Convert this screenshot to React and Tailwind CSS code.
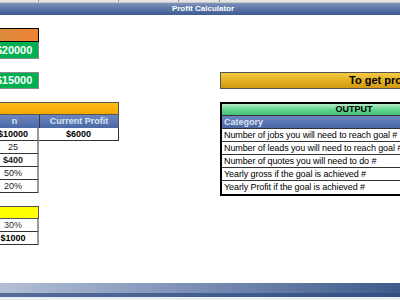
import React from "react";

const rows = [
  "Number of jobs you will need to reach goal #",
  "Number of leads you will need to reach goal #",
  "Number of quotes you will need to do #",
  "Yearly gross if the goal is achieved #",
  "Yearly Profit if the goal is achieved #",
];

const leftRows = [
  { v: "25", bold: false },
  { v: "$400", bold: true },
  { v: "50%", bold: false },
  { v: "20%", bold: false },
];

function ColumnHeads() {
  // spreadsheet column headers, only the bottom edge shows
  return (
    <div className="h-[3px] flex bg-[#e4e4e4] border-b border-[#c8c8c8] shrink-0">
      <div className="w-[39px] border-r border-[#9a9a9a]" />
      <div className="w-[80px] border-r border-[#9a9a9a]" />
      <div className="w-[60px] border-r border-[#9a9a9a]" />
      <div className="w-[41px] border-r border-[#9a9a9a]" />
    </div>
  );
}

export default function App() {
  return (
    <div className="w-[400px] h-[300px] overflow-hidden bg-white flex flex-col font-['Liberation_Sans',Arial,sans-serif]">
      <ColumnHeads />
      <div className="h-[12px] shrink-0 flex items-center justify-center bg-[linear-gradient(to_bottom,#8093bb_0%,#5d76a8_45%,#3f5c92_100%)]">
        <span className="text-[8px] font-bold text-white leading-none pl-[6px]">Profit Calculator</span>
      </div>

      <div className="flex-1 flex">
        {/* left column */}
        <div className="-ml-[11px] w-[130px] shrink-0 flex flex-col text-[9px] leading-none">
          <div className="mt-[13px] w-[50px] h-[14px] border border-black bg-[linear-gradient(to_right,#d38c3e,#ef8234)]" />
          <div className="w-[50px] h-[17px] bg-[#00b050] border border-t-0 border-[#8c8c8c] flex items-center justify-center">
            <span className="text-[11px] font-bold text-white">$20000</span>
          </div>
          <div className="mt-[13px] w-[50px] h-[17px] bg-[#00b050] border border-[#8c8c8c] flex items-center justify-center">
            <span className="text-[11px] font-bold text-white">$15000</span>
          </div>

          <div className="mt-[13px] h-[13px] border border-[#555] bg-[linear-gradient(to_bottom,#ffbc1a,#f6a900)]" />
          <div className="h-[13px] flex bg-[linear-gradient(to_bottom,#6a86c0,#4a68a6)] text-[#dbe3f1] font-bold border-x border-[#555]">
            <div className="w-[50px] border-r border-[#3a3a3a] flex items-center justify-center">n</div>
            <div className="flex-1 flex items-center justify-center">Current Profit</div>
          </div>
          <div className="h-[13px] flex font-bold text-black">
            <div className="w-[50px] border-r-2 border-b border-r-[#9a9a9a] border-b-[#333] flex items-center justify-center">$10000</div>
            <div className="flex-1 border-r border-b border-[#333] flex items-center justify-center">$6000</div>
          </div>
          {leftRows.map((r) => (
            <div
              key={r.v}
              className={`w-[50px] h-[13px] border-r-2 border-b border-r-[#9a9a9a] border-b-[#333] flex items-center justify-center text-[#222] ${r.bold ? "font-bold" : ""}`}
            >
              {r.v}
            </div>
          ))}

          <div className="mt-[13px] w-[50px] h-[13px] bg-[#ffff00] border border-[#555]" />
          <div className="w-[50px] h-[13px] border-r-2 border-b border-r-[#9a9a9a] border-b-[#333] flex items-center justify-center text-[#333]">30%</div>
          <div className="w-[50px] h-[13px] border-r-2 border-b border-r-[#9a9a9a] border-b-[#333] flex items-center justify-center font-bold text-black">$1000</div>
        </div>

        {/* right column */}
        <div className="ml-[101px] w-[268px] shrink-0 flex flex-col text-[9px] leading-none">
          <div className="mt-[57px] h-[17px] border border-[#555] bg-[linear-gradient(to_bottom,#f3ca45,#e2ae1e_55%,#cf9912)] flex items-center pl-[128px]">
            <span className="text-[11px] font-bold text-black whitespace-nowrap">To get profit of $15000</span>
          </div>

          <div className="mt-[13px] border-2 border-black flex flex-col">
            <div className="h-[12px] bg-[linear-gradient(to_bottom,#b8ecc8,#62d58f_50%,#45c277)] border-b border-[#333] flex items-center justify-center font-bold text-black">
              OUTPUT
            </div>
            <div className="h-[13px] bg-[linear-gradient(to_bottom,#6a86c0,#4a68a6)] border-b border-[#333] flex items-center px-[2px] font-bold text-[#dbe3f1]">
              Category
            </div>
            {rows.map((t, i) => (
              <div
                key={t}
                className={`h-[13px] flex items-center px-[2px] text-black whitespace-nowrap tracking-[-0.1px] ${i < rows.length - 1 ? "border-b border-[#333]" : ""}`}
              >
                {t}
              </div>
            ))}
          </div>
        </div>
      </div>

      <div className="h-[14px] shrink-0 bg-[linear-gradient(to_right,#b3bfd5,#7f93b8_45%,#3f5b8b)] relative">
        <div className="absolute inset-x-0 bottom-0 h-[4px] bg-[#2d4a80] opacity-70" />
      </div>
      <div className="h-[3px] shrink-0 bg-[#e9eef5]" />
    </div>
  );
}
